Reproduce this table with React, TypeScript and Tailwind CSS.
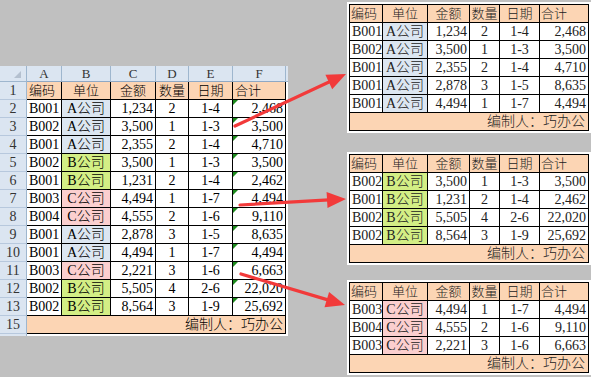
import React from 'react';

type Row = [string, 'A' | 'B' | 'C', string, string, string, string];

const rows: Row[] = [
  ['B001', 'A', '1,234', '2', '1-4', '2,468'],
  ['B002', 'A', '3,500', '1', '1-3', '3,500'],
  ['B001', 'A', '2,355', '2', '1-4', '4,710'],
  ['B002', 'B', '3,500', '1', '1-3', '3,500'],
  ['B001', 'B', '1,231', '2', '1-4', '2,462'],
  ['B003', 'C', '4,494', '1', '1-7', '4,494'],
  ['B004', 'C', '4,555', '2', '1-6', '9,110'],
  ['B001', 'A', '2,878', '3', '1-5', '8,635'],
  ['B001', 'A', '4,494', '1', '1-7', '4,494'],
  ['B003', 'C', '2,221', '3', '1-6', '6,663'],
  ['B002', 'B', '5,505', '4', '2-6', '22,020'],
  ['B002', 'B', '8,564', '3', '1-9', '25,692'],
];

const companyBg = {
  A: 'bg-[#dce6f1]',
  B: 'bg-[#d3ee85]',
  C: 'bg-[#fbcfcf]',
};

const headers = ['编码', '单位', '金额', '数量', '日期', '合计'];
const headAlign = ['justify-start', 'justify-center', 'justify-center', 'justify-center', 'justify-center', 'justify-start'];
const cellAlign = ['justify-start', 'justify-center', 'justify-end', 'justify-center', 'justify-center', 'justify-end'];

// widths include the right border line
const sheetW = ['w-[35px]', 'w-[49px]', 'w-[45px]', 'w-[33px]', 'w-[44px]', 'w-[53px]'];
const tableW = ['w-[33px]', 'w-[45px]', 'w-[42px]', 'w-[30px]', 'w-[40px]', 'w-[49px]'];

const font = "font-['Liberation_Serif','Noto_Sans_CJK_SC',serif] font-light whitespace-nowrap";

const RowNum = ({ n }: { n: React.ReactNode }) => (
  <div className="w-[27px] h-full flex items-center justify-center bg-[#dbe5f1] border-r border-b border-r-[#9eb6ce] border-b-[#b7c8dd] text-[#333] text-[14px]">
    {n}
  </div>
);

const Sheet = () => (
  <div className={`w-[288px] bg-white ${font} text-[14px] leading-none text-black`}>
    <div className="h-[16px] flex">
      <div className="relative w-[27px] h-full bg-[#dbe5f1] border-r border-b border-[#9eb6ce]">
        <div className="absolute right-[5px] bottom-[3px] w-0 h-0 border-l-[7px] border-l-transparent border-b-[7px] border-b-[#b4c0cf]" />
      </div>
      {['A', 'B', 'C', 'D', 'E', 'F'].map((c, i) => (
        <div key={c} className={`${sheetW[i]} h-full flex items-center justify-center bg-[#dbe5f1] border-r border-b border-r-[#9eb6ce] border-b-[#8fa8c4] text-[#333] text-[13px]`}>
          {c}
        </div>
      ))}
      <div className="w-[2px] h-full bg-[#dbe5f1] border-b border-[#9eb6ce]" />
    </div>

    <div className="h-[18px] flex">
      <RowNum n={1} />
      {headers.map((h, i) => (
        <div key={h} className={`${sheetW[i]} h-full flex items-center px-[2px] ${headAlign[i]} bg-[#fcd5b4] border-r border-b border-black text-[13px]`}>
          {h}
        </div>
      ))}
      <div className="w-[2px] h-full bg-white" />
    </div>

    {rows.map((r, ri) => (
      <div key={ri} className="h-[18px] flex">
        <RowNum n={ri + 2} />
        {r.map((v, i) => (
          <div
            key={i}
            className={`relative ${sheetW[i]} h-full flex items-center px-[2px] ${cellAlign[i]} border-r border-b border-black ${i === 1 ? companyBg[r[1]] : 'bg-white'}`}
          >
            {i === 5 && (
              <div className="absolute top-0 left-0 w-0 h-0 border-t-[5px] border-t-[#1c8a1c] border-r-[5px] border-r-transparent" />
            )}
            {i === 1 ? `${v}公司` : v}
          </div>
        ))}
        <div className="w-[2px] h-full bg-white" />
      </div>
    ))}

    <div className="h-[18px] flex">
      <RowNum n={15} />
      <div className="w-[259px] h-full flex items-center justify-end pr-[2px] bg-[#fcd5b4] border-r border-b border-black">
        编制人：巧办公
      </div>
      <div className="w-[2px] h-full bg-white" />
    </div>
    <div className="h-[2px] flex">
      <div className="w-[27px] h-full bg-[#dbe5f1] border-r border-[#9eb6ce]" />
    </div>
  </div>
);

const SplitTable = ({ company }: { company: 'A' | 'B' | 'C' }) => {
  const list = rows.filter((r) => r[1] === company);
  return (
    <div className="w-[244px] p-[2px] bg-white">
      <div className={`border-t border-l border-black ${font} text-[14px] leading-none text-[#222]`}>
        <div className="h-[18px] flex">
          {headers.map((h, i) => (
            <div key={h} className={`${tableW[i]} h-full flex items-center px-[1px] ${headAlign[i]} bg-[#fcd5b4] border-r border-b border-black text-[13px]`}>
              {h}
            </div>
          ))}
        </div>
        {list.map((r, ri) => (
          <div key={ri} className="h-[18px] flex">
            {r.map((v, i) => (
              <div
                key={i}
                className={`${tableW[i]} h-full flex items-center px-[2px] ${cellAlign[i]} border-r border-b border-black ${i === 1 ? companyBg[company] : 'bg-white'}`}
              >
                {i === 1 ? `${v}公司` : v}
              </div>
            ))}
          </div>
        ))}
        <div className="h-[18px] flex items-center justify-end pr-[3px] bg-[#fcd5b4] border-r border-b border-black">
          编制人：巧办公
        </div>
      </div>
    </div>
  );
};

const arrows = [
  { x1: 235, y1: 126, x2: 346, y2: 74 },
  { x1: 240, y1: 205, x2: 346, y2: 199 },
  { x1: 241, y1: 274, x2: 345, y2: 305 },
];

const Arrow = ({ x1, y1, x2, y2 }: { x1: number; y1: number; x2: number; y2: number }) => {
  const dx = x2 - x1;
  const dy = y2 - y1;
  const len = Math.hypot(dx, dy);
  const ux = dx / len;
  const uy = dy / len;
  const bx = x2 - ux * 19;
  const by = y2 - uy * 19;
  const hw = 8;
  const pts = `${x2},${y2} ${bx - uy * hw},${by + ux * hw} ${bx + uy * hw},${by - ux * hw}`;
  return (
    <g>
      <line x1={x1} y1={y1} x2={bx + ux * 2} y2={by + uy * 2} stroke="#f23a3a" strokeWidth={3.2} strokeLinecap="round" />
      <polygon points={pts} fill="#f23a3a" />
    </g>
  );
};

export default function App() {
  return (
    <div className="relative w-[591px] h-[377px] bg-[#c0c0c0] overflow-hidden flex">
      <div className="pt-[66px]">
        <Sheet />
      </div>
      <div className="ml-[59px] pt-[2px] flex flex-col">
        <SplitTable company="A" />
        <div className="h-[19px]" />
        <SplitTable company="B" />
        <div className="h-[15px]" />
        <SplitTable company="C" />
      </div>
      <svg className="absolute inset-0 pointer-events-none" width={591} height={377}>
        {arrows.map((a, i) => (
          <Arrow key={i} {...a} />
        ))}
      </svg>
    </div>
  );
}
